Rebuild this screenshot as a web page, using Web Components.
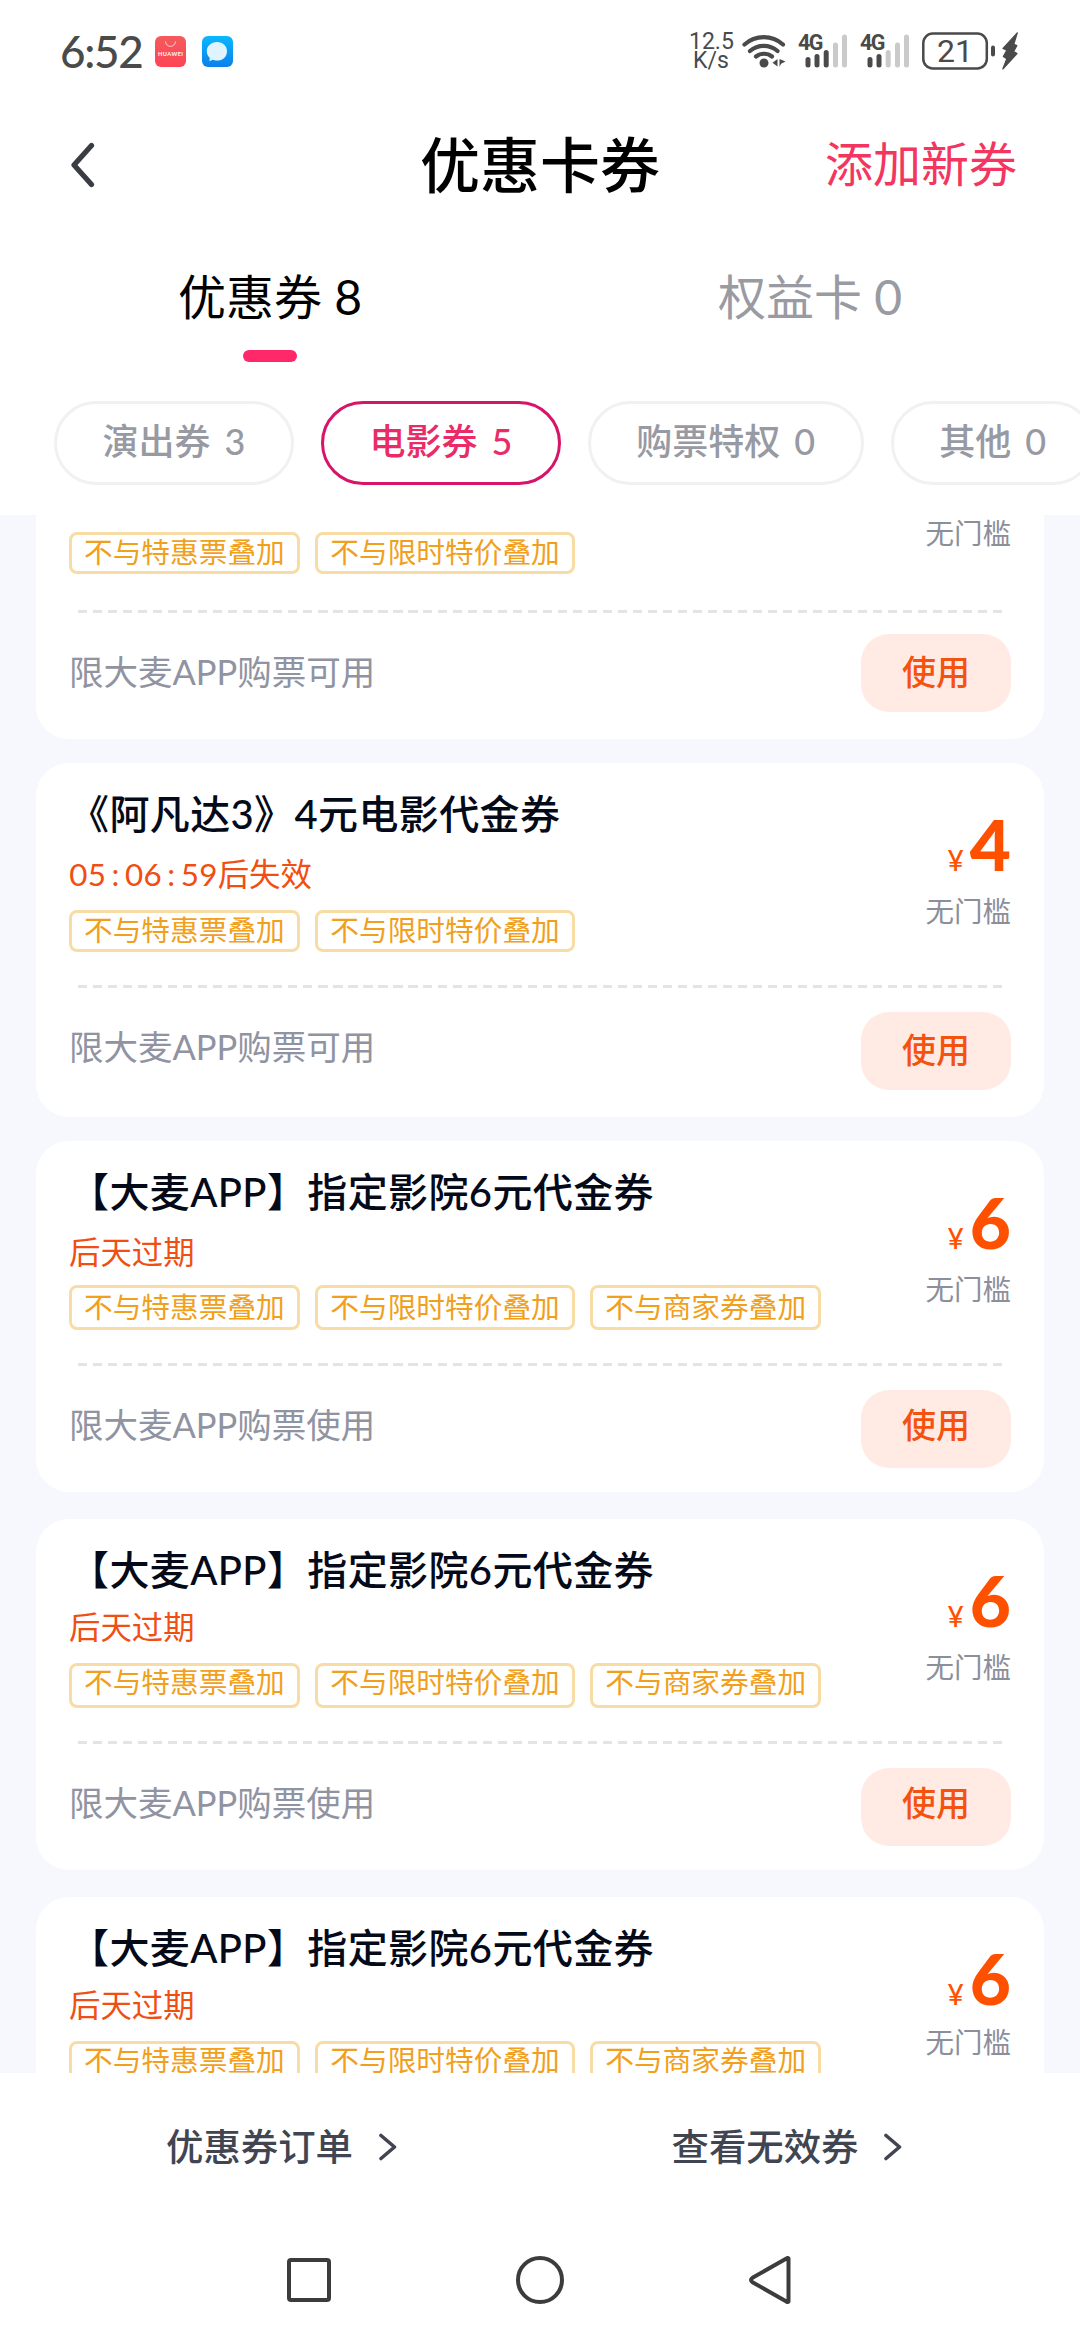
<!DOCTYPE html>
<html lang="zh-CN">
<head>
<meta charset="utf-8">
<title>优惠卡券</title>
<style>
  html, body { margin: 0; padding: 0; }
  body {
    width: 1080px; height: 2340px; overflow: hidden; background: #fff;
    display: flex; flex-direction: column;
    font-family: Lato, "Noto Sans CJK SC", sans-serif;
    text-spacing-trim: space-all;
    font-kerning: none;
  }
</style>
</head>
<body>
<status-bar></status-bar>
<page-header action="添加新券">优惠卡券</page-header>
<tab-strip>
  <tab-item active>优惠券 8</tab-item>
  <tab-item>权益卡 0</tab-item>
</tab-strip>
<chip-row>
  <filter-chip count="3">演出券</filter-chip>
  <filter-chip count="5" active>电影券</filter-chip>
  <filter-chip count="0">购票特权</filter-chip>
  <filter-chip count="0">其他</filter-chip>
</chip-row>
<coupon-list>
  <coupon-card style="--divider:36px;--foot:76px;--lift:2px">
    <coupon-tag slot="tags">不与特惠票叠加</coupon-tag>
    <coupon-tag slot="tags">不与限时特价叠加</coupon-tag>
    <span slot="limit">限大麦APP购票可用</span>
  </coupon-card>
  <coupon-card price="4" style="--expire:38px">
    <span slot="title">《阿凡达3》4元电影代金券</span>
    <count-down slot="expire" time="05:06:59">后失效</count-down>
    <coupon-tag slot="tags">不与特惠票叠加</coupon-tag>
    <coupon-tag slot="tags">不与限时特价叠加</coupon-tag>
    <span slot="limit">限大麦APP购票可用</span>
  </coupon-card>
  <coupon-card price="6" compact style="--expire:38px;--tag-text:38px">
    <span slot="title">【大麦APP】指定影院6元代金券</span>
    <span slot="expire">后天过期</span>
    <coupon-tag slot="tags">不与特惠票叠加</coupon-tag>
    <coupon-tag slot="tags">不与限时特价叠加</coupon-tag>
    <coupon-tag slot="tags">不与商家券叠加</coupon-tag>
    <span slot="limit">限大麦APP购票使用</span>
  </coupon-card>
  <coupon-card price="6" compact style="--expire:32px;--tag-text:32px">
    <span slot="title">【大麦APP】指定影院6元代金券</span>
    <span slot="expire">后天过期</span>
    <coupon-tag slot="tags">不与特惠票叠加</coupon-tag>
    <coupon-tag slot="tags">不与限时特价叠加</coupon-tag>
    <coupon-tag slot="tags">不与商家券叠加</coupon-tag>
    <span slot="limit">限大麦APP购票使用</span>
  </coupon-card>
  <coupon-card price="6" compact style="--expire:32px;--tag-text:32px;--threshold:34px">
    <span slot="title">【大麦APP】指定影院6元代金券</span>
    <span slot="expire">后天过期</span>
    <coupon-tag slot="tags">不与特惠票叠加</coupon-tag>
    <coupon-tag slot="tags">不与限时特价叠加</coupon-tag>
    <coupon-tag slot="tags">不与商家券叠加</coupon-tag>
  </coupon-card>
</coupon-list>
<action-bar>
  <action-link>优惠券订单</action-link>
  <action-link>查看无效券</action-link>
</action-bar>
<nav-bar></nav-bar>

<script>
const define = (name, html, setup) => {
  const tpl = document.createElement('template');
  tpl.innerHTML = html;
  customElements.define(name, class extends HTMLElement {
    constructor() {
      super();
      this.attachShadow({ mode: 'open' }).appendChild(tpl.content.cloneNode(true));
    }
    connectedCallback() { if (setup) setup(this, this.shadowRoot); }
  });
};

define('status-bar', `
<style>
  :host { display: flex; align-items: center; height: 102px; flex: none; box-sizing: border-box; padding: 0 62px 0 60px; color: #4a4a4a; }
  svg { display: block; flex: none; }
  .time { font-size: 44px; line-height: 54px; width: 95px; letter-spacing: -1.300px; font-weight: 500; white-space: nowrap; }
  .msg { margin-left: 16px; }
  .speed { margin-left: auto; width: 44px; font: 23px/19px Roboto, sans-serif; text-align: center; margin-right: 9px; }
  .speed span { display: block; }
  .wrap { display: grid; margin-left: 12px; }
  .wrap > * { grid-area: 1 / 1; }
  .pct { font: 32px/39px Roboto, sans-serif; width: 66px; text-align: center; }
  .g4 { font: bold 21.500px/20px Roboto, sans-serif; letter-spacing: -1.600px; align-self: start; margin-top: -1px; }
</style>
<span class="time">6:52</span>
<svg width="31" height="31" viewBox="0 0 31 31"><defs><linearGradient id="r" x2="0" y2="1"><stop stop-color="#f35b5c"/><stop offset="1" stop-color="#ff4355"/></linearGradient></defs><rect width="31" height="31" rx="6" fill="url(#r)"/><path d="M10.500 5.500c.6 6.500 9.400 6.500 10 0" fill="none" stroke="#ffd9d9" stroke-width=".9"/><text x="15.500" y="20" text-anchor="middle" font-size="5.600" font-weight="bold" font-family="Lato" textLength="25" fill="#fff">HUAWEI</text></svg>
<svg class="msg" width="31" height="31" viewBox="0 0 31 31"><defs><linearGradient id="b" x2="0" y2="1"><stop stop-color="#0ab8ff"/><stop offset="1" stop-color="#0a80ea"/></linearGradient></defs><rect width="31" height="31" rx="6" fill="url(#b)"/><path d="M15 6c5.800 0 10 4 10 9.200 0 6-4.500 9.300-10 9.300-1.800 0-3-.3-4.300-.8L7.500 25.200l.2-3.500C6 20 4.800 18 4.800 15.200 4.800 10 9.200 6 15 6z" fill="#dff4ff"/></svg>
<div class="speed"><span>12.5</span><span>K/s</span></div>
<svg width="44" height="36" viewBox="0 0 44 36"><g fill="none" stroke="#4a4a4a" stroke-width="4.200" stroke-linecap="round"><path d="M2.500 11.500a29 29 0 0 1 38.500 0"/><path d="M8 18a21 21 0 0 1 27.500 0"/><path d="M14 23.500a13 13 0 0 1 16 0"/></g><circle cx="22" cy="30" r="4.500" fill="#4a4a4a"/><path d="M35.500 26v7.500l-5-3.700zM37.500 26v8l1.600-3.200 4.400-2.300z" fill="#4a4a4a"/></svg>
<div class="wrap"><svg width="50" height="34" viewBox="0 0 50 34"><g stroke="#4a4a4a" stroke-width="5" stroke-linecap="round"><path d="M10 25.500v5.500M19 22.500v8.500M28.200 18.500v12.500"/><path d="M37.500 11v20M46.500 3v28" stroke="#cacaca"/></g></svg><span class="g4">4G</span></div>
<div class="wrap"><svg width="50" height="34" viewBox="0 0 50 34"><g stroke="#4a4a4a" stroke-width="5" stroke-linecap="round"><path d="M10 25.500v5.500M19 22.500v8.500"/><path d="M28.200 18.500v12.500M37.500 11v20M46.500 3v28" stroke="#cacaca"/></g></svg><span class="g4">4G</span></div>
<div class="wrap"><svg width="74" height="38" viewBox="0 0 74 38"><rect x="1.300" y="1.500" width="63.500" height="35" rx="9.500" fill="none" stroke="#4a4a4a" stroke-width="2.500"/><rect x="69" y="13.500" width="4" height="11" rx="2" fill="#4a4a4a"/></svg><span class="pct">21</span></div>
<svg width="16" height="38" viewBox="0 0 16 38" style="margin-left:6px"><path d="M15.300.8 1 16.500l3.800 1.700-3.500 6.300 3.500 2.200L.8 37 15 21.500l-3.300-2 3.100-5.900-3-1.400z" fill="#4a4a4a" stroke="#4a4a4a" stroke-width="1.200" stroke-linejoin="round"/></svg>
`);

define('page-header', `
<style>
  :host { display: grid; grid-template-columns: 1fr auto 1fr; align-items: center; height: 126px; flex: none; box-sizing: border-box; padding: 0 63px 0 70px; }
  svg { display: block; }
  h1 { margin: 0 0 0 -7px; font-size: 60px; line-height: 80px; font-weight: 500; color: #000; }
  a { justify-self: end; font-size: 48px; line-height: 60px; color: #f3365f; margin-top: -2px; }
</style>
<svg width="26" height="46" viewBox="0 0 26 46"><path d="M21.500 3.500 4 23l17.500 19.500" fill="none" stroke="#393c42" stroke-width="5.200" stroke-linecap="round" stroke-linejoin="round"/></svg>
<h1><slot></slot></h1><a></a>
`, (el, root) => { root.querySelector('a').textContent = el.getAttribute('action'); });

define('tab-strip', `
<style>:host { display: flex; height: 173px; flex: none; } ::slotted(*) { flex: 1; }</style><slot></slot>`);

define('tab-item', `
<style>
  :host { display: flex; flex-direction: column; align-items: center; font-size: 48px; line-height: 60px; color: #999aa2; padding-top: 39px; }
  :host([active]) { color: #000; }
  i { width: 54px; height: 12px; border-radius: 6px; margin-top: 23px; }
  :host([active]) i { background: #ff2869; }
</style><span><slot></slot></span><i></i>`);

define('chip-row', `
<style>:host { display: flex; gap: 27px; height: 114px; flex: none; padding-left: 54px; overflow: hidden; } ::slotted(*) { flex: none; }</style><slot></slot>`);

define('filter-chip', `
<style>
  :host { display: flex; box-sizing: border-box; height: 84px; border: 3px solid #f1f1f3; border-radius: 42px; padding: 0 45.500px; gap: 14px; font-size: 36px; line-height: 75px; font-weight: 500; color: #989aa3; white-space: nowrap; }
  :host([active]) { border-color: #d8136a; color: #ea2b67; }
  b { font-weight: 500; }
</style><span><slot></slot></span><b></b>`,
(el, root) => { root.querySelector('b').textContent = el.getAttribute('count'); });

define('coupon-list', `
<style>
  :host { display: block; height: 1558px; flex: none; overflow: hidden; background: #f7f8fd; }
  div { display: flex; flex-direction: column; padding: 0 36px; margin-top: -130px; }
  ::slotted(*) { flex: none; margin-bottom: 24px; }
  ::slotted([compact]) { margin-bottom: 27px; }
</style><div><slot></slot></div>`);

define('coupon-tag', `
<style>
  :host { display: block; box-sizing: border-box; height: var(--tag-h, 42px); border: 3px solid #f8dca6; border-radius: 8px; padding: 0 12px; font-size: 28.700px; line-height: var(--tag-text, 34px); color: #f0a01c; white-space: nowrap; }
</style><slot></slot>`);

define('count-down', `
<style>:host { display: inline; } i { font-style: normal; display: inline-block; width: .592em; text-align: center; }</style><span></span><slot></slot>`,
(el, root) => {
  root.querySelector('span').innerHTML = [...el.getAttribute('time')].map(c => '<i>' + c + '</i>').join('');
});

define('coupon-card', `
<style>
  :host { display: block; box-sizing: border-box; height: 354px; background: #fff; border-radius: 33px; padding: 0 33px; }
  :host([compact]) { height: 351px; --tag-h: 45px; --tag-gap: 12px; --lift: 9px; }
  .top { display: flex; height: 189px; }
  .info { flex: 1; padding-top: 26px; }
  .title { font-size: 40px; line-height: 50px; height: 50px; font-weight: 500; letter-spacing: .38px; color: #050a18; white-space: nowrap; }
  .expire { margin-top: 16px; height: 40px; font-size: 31.400px; line-height: var(--expire, 40px); color: #f04e12; white-space: nowrap; }
  .tags { margin-top: var(--tag-gap, 15px); display: flex; gap: 15.500px; }
  .side { display: flex; flex-direction: column; align-items: flex-end; padding-top: 47px; }
  .price { display: flex; align-items: baseline; gap: 6px; color: #ff5000; font-weight: 900; font-size: 71px; line-height: 68px; height: 68px; }
  .price small { font-size: 28px; font-weight: 500; }
  .th { margin-top: 13px; height: 40px; font-size: 28.500px; line-height: var(--threshold, 40px); color: #8b8f9b; }
  .line { height: 3px; margin: var(--divider, 33px) 9px 0; background: repeating-linear-gradient(90deg, #e4e4e4 0 9.500px, transparent 9.500px 15px); }
  .bottom { display: flex; justify-content: space-between; height: 78px; margin-top: calc(57px - var(--divider, 33px)); }
  .limit { font-size: 34.500px; line-height: var(--foot, 70px); color: #9093a1; }
  .use { box-sizing: border-box; width: 150px; height: 78px; border-radius: 28px; background: #ffebe4; color: #f4520f; font-size: 34px; line-height: calc(78px - var(--lift, 3px)); font-weight: 500; text-align: center; }
</style>
<div class="top">
  <div class="info">
    <div class="title"><slot name="title"></slot></div>
    <div class="expire"><slot name="expire"></slot></div>
    <div class="tags"><slot name="tags"></slot></div>
  </div>
  <div class="side">
    <div class="price"></div>
    <div class="th">无门槛</div>
  </div>
</div>
<div class="line"></div>
<div class="bottom"><div class="limit"><slot name="limit"></slot></div><div class="use" role="button">使用</div></div>
`, (el, root) => {
  const price = el.getAttribute('price');
  if (price) root.querySelector('.price').innerHTML = '<small>¥</small><span>' + price + '</span>';
  if (!el.querySelector('[slot=limit]')) root.querySelector('.bottom').remove();
});

define('action-bar', `
<style>:host { display: flex; height: 147px; flex: none; background: #fff; box-sizing: border-box; padding-left: 166px; } ::slotted(*) { flex: none; } ::slotted(:first-child) { width: 505.500px; }</style><slot></slot>`);

define('action-link', `
<style>
  :host { display: flex; align-items: center; gap: 25px; box-sizing: border-box; color: #414551; font-size: 37.400px; line-height: 50px; font-weight: 500; white-space: nowrap; }
  svg { display: block; }
</style><span><slot></slot></span><svg width="20" height="28" viewBox="0 0 20 28"><path d="M3 2.500 16.500 14 3 25.500" fill="none" stroke="#414551" stroke-width="3.600" stroke-linecap="round" stroke-linejoin="round"/></svg>`);

define('nav-bar', `
<style>:host { display: flex; justify-content: center; align-items: center; height: 120px; flex: none; gap: 183px; } svg { display: block; }</style>
<svg width="48" height="48" viewBox="0 0 48 48" fill="none" stroke="#3c3c3c" stroke-width="4"><rect x="4" y="4" width="40" height="40" rx="2"/></svg>
<svg width="48" height="48" viewBox="0 0 48 48" fill="none" stroke="#3c3c3c" stroke-width="4"><circle cx="24" cy="24" r="22"/></svg>
<svg width="48" height="48" viewBox="0 0 48 48" fill="none" stroke="#3c3c3c" stroke-width="4" stroke-linejoin="round"><path d="M41.500 2.500v43q-1 1-2.500-.3L5.500 26.200q-3-2.200 0-4.400L39 2.800q1.500-1.300 2.500-.3z"/></svg>
`);
</script>
</body>
</html>
